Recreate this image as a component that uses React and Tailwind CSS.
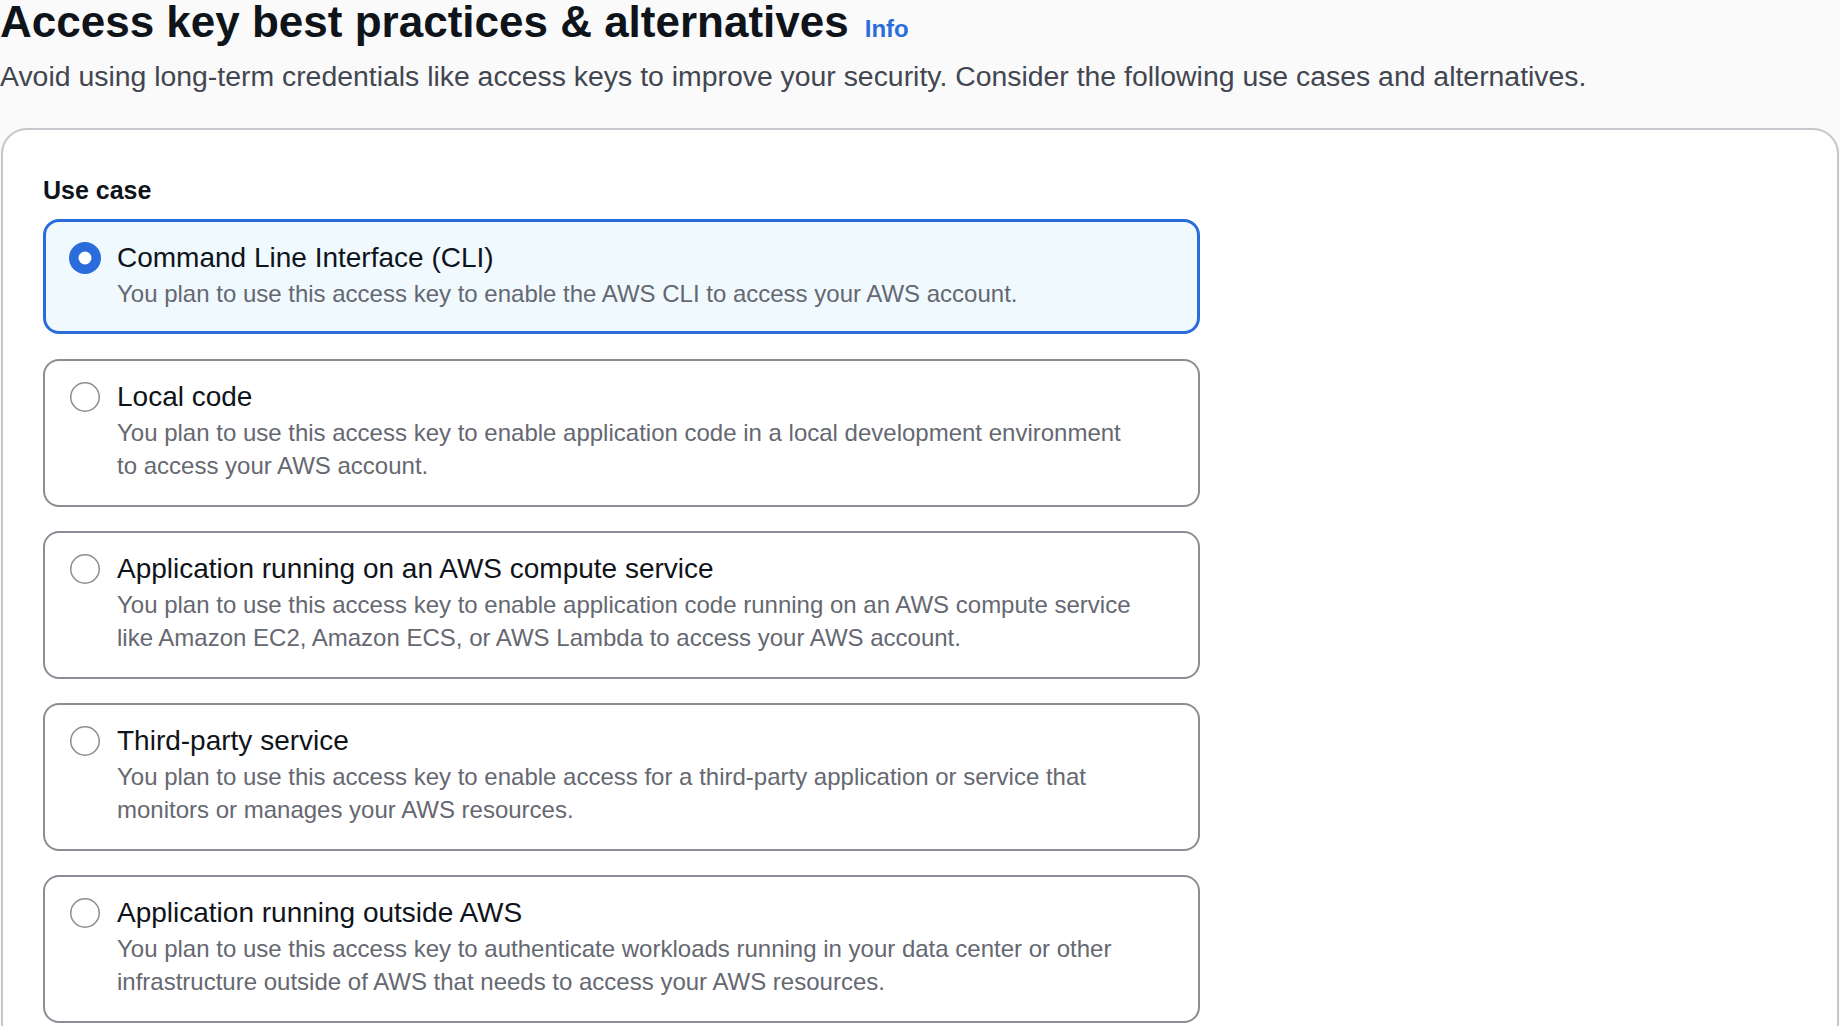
import React from 'react'

const useCases = [
  {
    id: 'cli',
    title: 'Command Line Interface (CLI)',
    lines: ['You plan to use this access key to enable the AWS CLI to access your AWS account.'],
  },
  {
    id: 'local',
    title: 'Local code',
    lines: [
      'You plan to use this access key to enable application code in a local development environment',
      'to access your AWS account.',
    ],
  },
  {
    id: 'compute',
    title: 'Application running on an AWS compute service',
    lines: [
      'You plan to use this access key to enable application code running on an AWS compute service',
      'like Amazon EC2, Amazon ECS, or AWS Lambda to access your AWS account.',
    ],
  },
  {
    id: 'third',
    title: 'Third-party service',
    lines: [
      'You plan to use this access key to enable access for a third-party application or service that',
      'monitors or manages your AWS resources.',
    ],
  },
  {
    id: 'outside',
    title: 'Application running outside AWS',
    lines: [
      'You plan to use this access key to authenticate workloads running in your data center or other',
      'infrastructure outside of AWS that needs to access your AWS resources.',
    ],
  },
]

function Radio({ checked }) {
  return (
    <svg width="32" height="32" viewBox="0 0 32 32" className="shrink-0">
      {checked ? (
        <>
          <circle cx="16" cy="16" r="16" fill="#2b6cdc" />
          <circle cx="16" cy="16" r="6.5" fill="#ffffff" />
        </>
      ) : (
        <circle cx="16" cy="16" r="14.25" fill="#ffffff" stroke="#8c8c94" strokeWidth="1.5" />
      )}
    </svg>
  )
}

export default function App() {
  const selected = 'cli'

  return (
    <div className="min-h-screen bg-[#fafafa] font-['Liberation_Sans',Arial,sans-serif] text-[#0f141a] overflow-hidden">
      {/* Header */}
      <div className="flex items-baseline pt-[2px]">
        <h1 className="text-[44px] leading-[40px] font-bold">Access key best practices &amp; alternatives</h1>
        <a className="ml-[16px] text-[24px] font-bold text-[#2b6cdc]">Info</a>
      </div>
      <p className="mt-[11px] text-[28.4px] leading-[36px] text-[#424650]">
        Avoid using long-term credentials like access keys to improve your security. Consider the following use cases and alternatives.
      </p>

      {/* Container */}
      <div className="mt-[34px] mx-[1px] bg-white border-2 border-[#c6c6cd] rounded-[26px] pt-[44px] pl-[40px] pb-10 min-h-[920px]">
        <div className="text-[25px] leading-[32px] font-bold mb-[13px]">Use case</div>

        <div className="flex flex-col w-[1157px]">
          {useCases.map((uc, i) => {
            const isSel = uc.id === selected
            return (
              <label
                key={uc.id}
                className={`flex gap-4 rounded-[16px] ${
                  isSel
                    ? 'border-[3px] border-[#2b6cdc] bg-[#f0f9fe] pt-[17px] pb-[21px] pl-[23px]'
                    : 'border-2 border-[#8c8c94] bg-white pt-[17px] pb-[23px] pl-[24px]'
                } ${i === 0 ? '' : i === 1 ? 'mt-[25px]' : 'mt-[24px]'} pr-6`}
              >
                <div className="h-[38px] flex items-center">
                  <Radio checked={isSel} />
                </div>
                <div className="flex-1 min-w-0">
                  <div className="text-[28px] leading-[38px] text-[#0f141a]">{uc.title}</div>
                  <div className="text-[24px] leading-[33px] text-[#656871]">
                    {uc.lines.map((l, j) => (
                      <div key={j} className="whitespace-nowrap">{l}</div>
                    ))}
                  </div>
                </div>
              </label>
            )
          })}
        </div>
      </div>
    </div>
  )
}
